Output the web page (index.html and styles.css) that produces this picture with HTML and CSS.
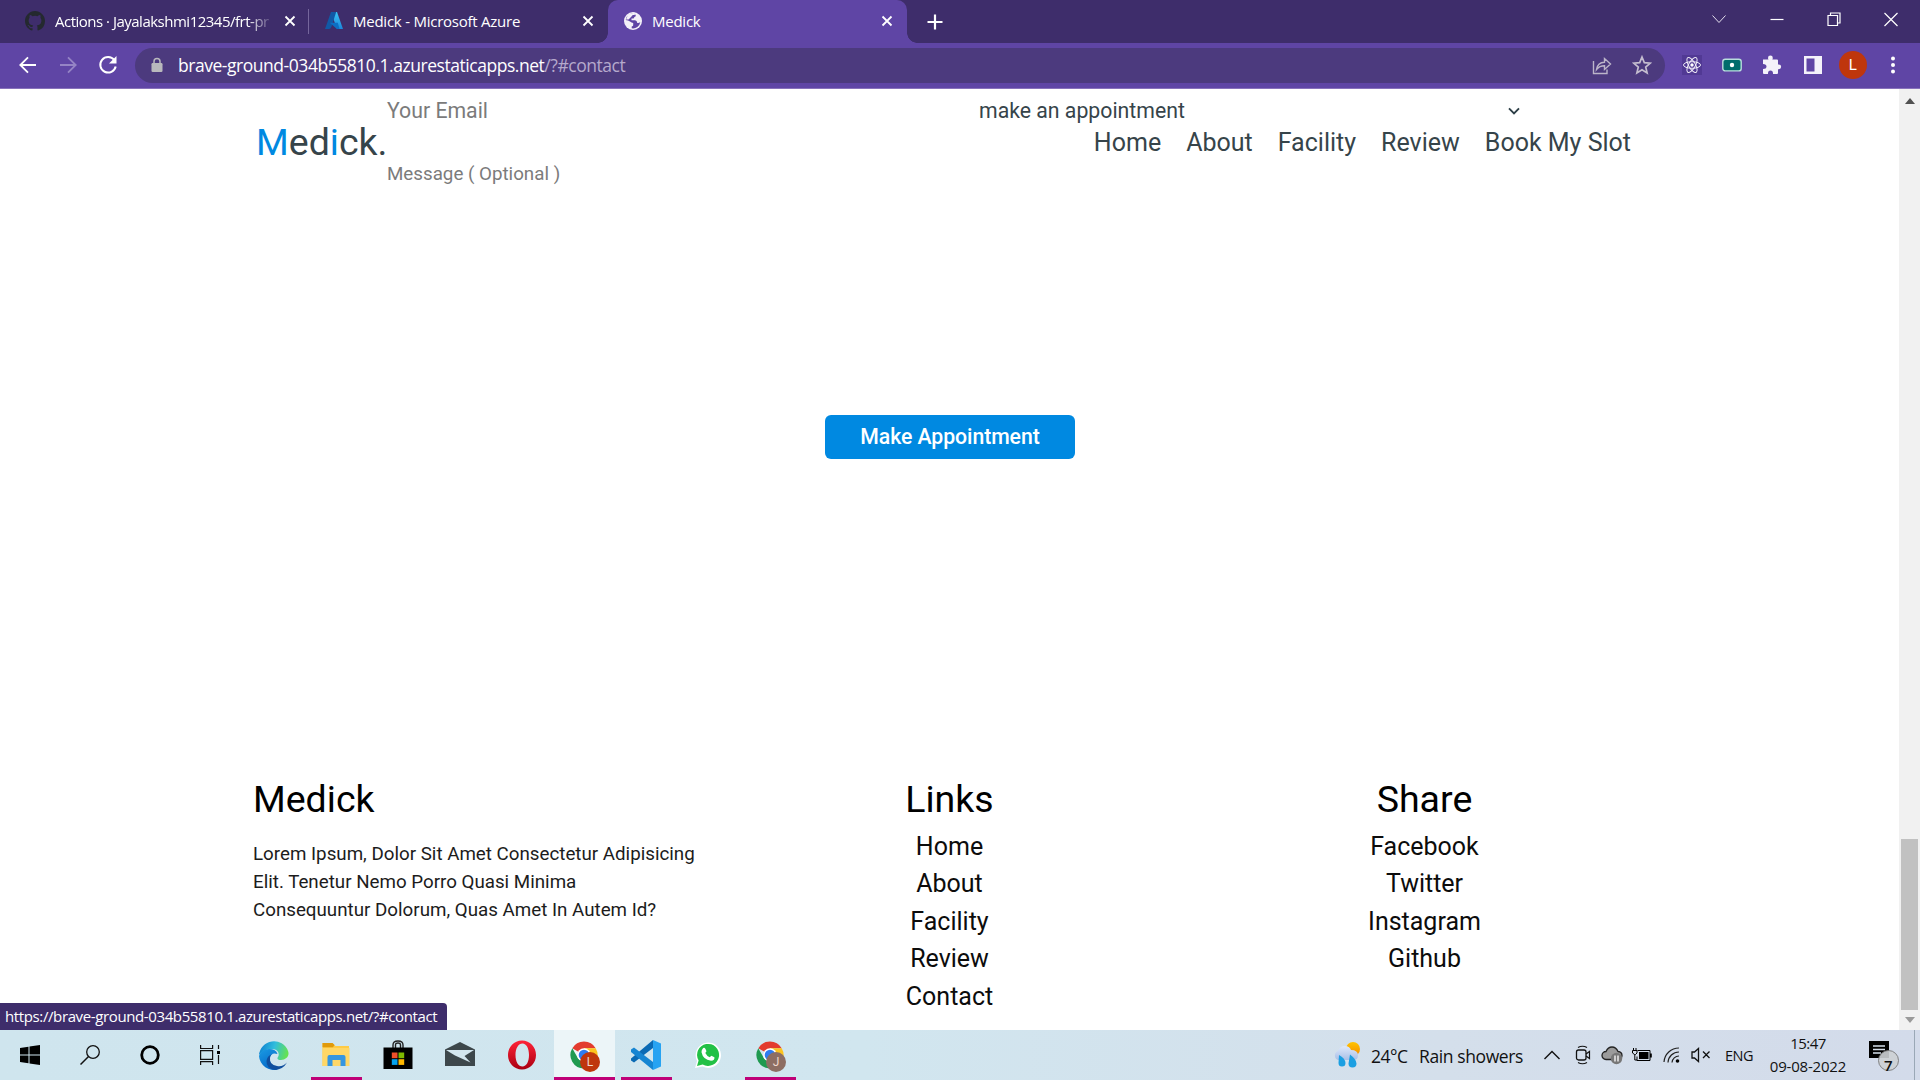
FILE: index.html
```html
<!DOCTYPE html>
<html lang="en">
<head>
<meta charset="utf-8">
<title>Medick</title>
<link rel="stylesheet" href="styles.css">
</head>
<body>
<svg class="defs" width="0" height="0">
  <defs>
    <linearGradient id="az1" x1="0" y1="0" x2="0" y2="1"><stop offset="0" stop-color="#3cc6f5"/><stop offset="1" stop-color="#1b86dc"/></linearGradient>
    <linearGradient id="edgeTop" x1="0" y1="0.3" x2="1" y2="0.5"><stop offset="0" stop-color="#0c7fd0"/><stop offset=".5" stop-color="#31bddd"/><stop offset="1" stop-color="#66e34f"/></linearGradient>
    <linearGradient id="edgeBody" x1="0" y1="0" x2="0.5" y2="1"><stop offset="0" stop-color="#1a9be3"/><stop offset="1" stop-color="#0669c8"/></linearGradient>
    <linearGradient id="op" x1="0" y1="0" x2="0" y2="1"><stop offset="0" stop-color="#ff2338"/><stop offset="1" stop-color="#a90011"/></linearGradient>
    <linearGradient id="sun" x1="0" y1="0" x2="0" y2="1"><stop offset="0" stop-color="#ffc400"/><stop offset="1" stop-color="#f58b00"/></linearGradient>
    <linearGradient id="cloud" x1="0" y1="0" x2="0" y2="1"><stop offset="0" stop-color="#dfe9fb"/><stop offset="1" stop-color="#a9bfe6"/></linearGradient>
    <symbol id="close" viewBox="0 0 12 12"><path d="M1.5 1.5l9 9M10.5 1.5l-9 9" stroke="#fff" stroke-width="1.8"/></symbol>
    <symbol id="chrome" viewBox="0 0 30 30">
      <path d="M15 15L3.3 8.2A13.5 13.5 0 0 1 26.7 8.2L15 8.2z" fill="#e33b2e"/>
      <path d="M15 8.2H26.7A13.5 13.5 0 0 1 15 28.5L20.9 18.4z" fill="#fcc31e"/>
      <path d="M3.3 8.2L9.1 18.4Q12 22 20.9 18.4L15 28.5A13.5 13.5 0 0 1 3.3 8.2z" fill="#1f9a50"/>
      <circle cx="15" cy="15" r="6.8" fill="#fff"/><circle cx="15" cy="15" r="5.3" fill="#2f7cf0"/>
    </symbol>
  </defs>
</svg>
<div class="desktop">
  <div class="tabs">
    <div class="tab tab-first">
      <svg class="fav" viewBox="0 0 16 16"><path fill="#24292f" d="M8 0C3.58 0 0 3.58 0 8c0 3.54 2.29 6.53 5.47 7.59.4.07.55-.17.55-.38 0-.19-.01-.82-.01-1.49-2.01.37-2.53-.49-2.69-.94-.09-.23-.48-.94-.82-1.13-.28-.15-.68-.52-.01-.53.63-.01 1.08.58 1.23.82.72 1.21 1.87.87 2.33.66.07-.52.28-.87.51-1.07-1.78-.2-3.64-.89-3.64-3.95 0-.87.31-1.59.82-2.15-.08-.2-.36-1.02.08-2.12 0 0 .67-.21 2.2.82a7.6 7.6 0 0 1 4 0c1.53-1.04 2.2-.82 2.2-.82.44 1.1.16 1.92.08 2.12.51.56.82 1.27.82 2.15 0 3.07-1.87 3.75-3.65 3.95.29.25.54.73.54 1.48 0 1.07-.01 1.93-.01 2.2 0 .21.15.46.55.38A8.01 8.01 0 0 0 16 8c0-4.42-3.58-8-8-8z"/></svg>
      <span class="tab-title fade">Actions · Jayalakshmi12345/frt-pr</span>
      <svg class="x"><use href="#close"/></svg>
    </div>
    <div class="tab">
      <svg class="fav" viewBox="0 0 20 20"><path d="M7 1h6l6 17h-6z" fill="url(#az1)"/><path d="M7 1h5.2L7.500 15.500Q6.500 18 5 18H1z" fill="#1159a6"/><path d="M5.800 11.800h8l1.700 6.200h-2.600z" fill="#0c6fc4"/></svg>
      <span class="tab-title">Medick - Microsoft Azure</span>
      <svg class="x"><use href="#close"/></svg>
    </div>
    <div class="tab active">
      <svg class="fav" viewBox="0 0 20 20"><circle cx="10" cy="10" r="9" fill="#f3f0f8"/><path fill="#5f45a5" d="M11.800 2.800A7.400 7.400 0 0 0 2.700 9q2.500.2 4.300 1.500 1.500 1 3.200 1.500v2.200q0 1-1.500 1.200v1.900a7.400 7.400 0 0 0 8.600-6.300q-1.300 1.300-3 .9-.3-2.500-2.300-2.700H8.500V7.500h1.800q1-.3 1-1.500 1.600-.3 1.500-1.500z" /><path d="M11.800 1.500v2.500h-2L8 6 5.500 8.500 3 8.500 5 3.500z" fill="#f3f0f8"/></svg>
      <span class="tab-title">Medick</span>
      <svg class="x"><use href="#close"/></svg>
    </div>
    <svg class="plus" viewBox="0 0 16 16"><path d="M8 .5v15M.5 8h15" stroke="#fff" stroke-width="2.200"/></svg>
    <div class="win">
      <svg viewBox="0 0 16 16"><path d="M1.500 4.500l6.500 7 6.500-7" fill="none" stroke="#e5e0ee"/></svg>
      <svg viewBox="0 0 16 16"><path d="M1.500 8.500h13" stroke="#fff" stroke-width="1.200"/></svg>
      <svg viewBox="0 0 16 16"><path d="M2 4.500h9.500v10H2zM4.500 4.500V2H14v10h-2.500" fill="none" stroke="#fff" stroke-width="1.200"/></svg>
      <svg viewBox="0 0 16 16"><path d="M1.500 2l13 13M14.500 2l-13 13" stroke="#fff" stroke-width="1.200"/></svg>
    </div>
  </div>

  <div class="toolbar">
    <div class="nav-btns">
      <svg viewBox="0 0 20 20"><path d="M18 10H2.500M10 2.300L2.300 10l7.700 7.700" fill="none" stroke="#fff" stroke-width="1.800"/></svg>
      <svg viewBox="0 0 20 20"><path d="M2 10h15.500M10 2.300l7.700 7.700-7.700 7.700" fill="none" stroke="#9584c5" stroke-width="1.800"/></svg>
      <svg viewBox="0 0 20 20"><path d="M16.300 5A7.800 7.800 0 1 0 17.700 11.500" fill="none" stroke="#fff" stroke-width="2"/><path d="M18.500 1v7.500H11z" fill="#fff"/></svg>
    </div>
    <div class="omnibox">
      <svg class="lock" viewBox="0 0 12 16"><path d="M3 7V4.500a3 3 0 0 1 6 0V7" fill="none" stroke="#b9b9bd" stroke-width="1.500"/><rect x=".5" y="6" width="11" height="9" rx="1.200" fill="#b9b9bd"/></svg>
      <span class="url">brave-ground-034b55810.1.azurestaticapps.net<i>/?#contact</i></span>
      <svg class="share" viewBox="0 0 20 20"><path d="M1.500 6v12.500h13.500v-4M4.500 14.500q1-7 8-7.300V3.500L18.500 9l-6 5.500v-3.700q-5 0-8 3.700z" fill="none" stroke="#bcb5c9" stroke-width="1.400"/></svg>
      <svg class="star" viewBox="0 0 20 20"><path d="M10 2l2.300 5.600 6 .5-4.600 3.900 1.400 5.900-5.100-3.200-5.100 3.200 1.400-5.900L1.700 8.100l6-.5z" fill="none" stroke="#c4bdcf" stroke-width="1.700"/></svg>
    </div>
    <div class="exts">
      <div><svg class="react" viewBox="0 0 20 20"><g fill="none" stroke="#f0ecf8" stroke-width="1"><ellipse cx="10" cy="10" rx="8.500" ry="3.300"/><ellipse cx="10" cy="10" rx="8.500" ry="3.300" transform="rotate(60 10 10)"/><ellipse cx="10" cy="10" rx="8.500" ry="3.300" transform="rotate(120 10 10)"/></g><circle cx="10" cy="10" r="1.700" fill="#fff"/></svg></div>
      <div><svg viewBox="0 0 20 20"><rect x=".8" y="4.300" width="18.400" height="11.600" rx="2.500" fill="#006c6c" stroke="#b9dedd" stroke-width="1.400"/><circle cx="10" cy="10" r="2.200" fill="#fff"/></svg></div>
      <div><svg viewBox="0 0 20 20"><path fill="#f4f2fa" d="M1 4.500h5.500q-.5-1-.5-1.600a2.400 2.400 0 0 1 4.800 0q0 .6-.5 1.600H15q1 0 1 1v4h.8a2.300 2.300 0 0 1 0 4.700H16V18q0 1-1 1h-4q.2-3.500-2.500-3.500T6 19H2q-1 0-1-1v-4q3.500 0 3.500-2.500T1 9z"/></svg></div>
      <div><svg viewBox="0 0 20 20"><path fill="#f4f2fa" fill-rule="evenodd" d="M1 1h18v18H1zM3.500 3.500v13h8v-13z"/></svg></div>
      <div><span class="avatar">L</span></div>
      <div><svg viewBox="0 0 20 20"><circle cx="10" cy="3.500" r="2" fill="#fff"/><circle cx="10" cy="10" r="2" fill="#fff"/><circle cx="10" cy="16.500" r="2" fill="#fff"/></svg></div>
    </div>
  </div>

  <div class="view">
    <main class="page">
      <header class="header">
        <a class="logo"><b>M</b>ed<b>i</b>ck.</a>
        <nav class="nav"><a>Home</a><a>About</a><a>Facility</a><a>Review</a><a>Book My Slot</a></nav>
      </header>
      <form class="form">
        <div class="fields">
          <span class="placeholder">Your Email</span>
          <span class="select">make an appointment
            <svg viewBox="0 0 12 8"><path d="M1 1.300l5 5 5-5" fill="none" stroke="#2c3e46" stroke-width="1.900"/></svg>
          </span>
        </div>
        <div class="message">Message ( Optional )</div>
        <a class="btn">Make Appointment</a>
      </form>
      <footer class="footer">
        <div class="about"><h3>Medick</h3><p>Lorem Ipsum, Dolor Sit Amet Consectetur Adipisicing<br>Elit. Tenetur Nemo Porro Quasi Minima<br>Consequuntur Dolorum, Quas Amet In Autem Id?</p></div>
        <div class="links"><h3>Links</h3><a>Home</a><a>About</a><a>Facility</a><a>Review</a><a>Contact</a></div>
        <div class="links"><h3>Share</h3><a>Facebook</a><a>Twitter</a><a>Instagram</a><a>Github</a></div>
      </footer>
      <div class="status"><span>https://brave-ground-034b55810.1.azurestaticapps.net/?#contact</span></div>
    </main>
    <div class="scrollbar">
      <svg viewBox="0 0 10 6"><path d="M0 6l5-6 5 6z" fill="#505050"/></svg>
      <div class="thumb"></div>
      <svg viewBox="0 0 10 6"><path d="M0 0l5 6 5-6z" fill="#9a9a9a"/></svg>
    </div>
  </div>

  <div class="taskbar">
    <div class="sys">
      <div><svg width="20" height="20" viewBox="0 0 20 20"><path d="M0 3l8.500-1.200v7.700H0zM9.500 1.600L20 0v9.500H9.500zM0 10.500h8.500v7.700L0 17zM9.500 10.500H20V20L9.500 18.400z"/></svg></div>
      <div><svg width="20" height="20" viewBox="0 0 20 20"><circle cx="13" cy="7" r="6.300" fill="none" stroke="#111" stroke-width="1.300"/><path d="M8.500 11.500L.5 19.500" stroke="#111" stroke-width="1.500"/></svg></div>
      <div><svg width="20" height="20" viewBox="0 0 20 20"><circle cx="10" cy="10" r="8.300" fill="none" stroke="#000" stroke-width="2.800"/></svg></div>
      <div><svg width="20" height="20" viewBox="0 0 20 20"><path d="M.6 0v3.500h12V0M.6 5.700h12v8.600H.6zM.6 20v-3.300h12V20M18.500 0v4M18.500 10v9" fill="none" stroke="#111" stroke-width="1.200"/><path d="M17 6h3v3h-3z"/></svg></div>
    </div>
    <div class="apps">
      <div><svg viewBox="0 0 30 30"><path d="M0 15A15 15 0 0 1 29 11c2 5-2 9-7 9-4 0-4-2-3-3 2-3 0-8-6-8Q4 9 0 15z" fill="url(#edgeTop)"/><path d="M0 16Q2 9 10 9q7 0 8.500 5Q12 12 11 18q-1 8 8 11.400A15 15 0 0 1 0 16z" fill="url(#edgeBody)"/><path d="M11 17q-1 8 7 9 6 1 10-3.500A15 15 0 0 1 16 30Q7 28 7.500 21 8 16 13 14q-1.500 1-2 3z" fill="#104f9e"/></svg></div>
      <div class="open"><svg viewBox="0 0 30 30"><path d="M1.500 3h10l3 3H28v20H1.500z" fill="#ffcb45"/><path d="M1.500 3h10l2 2-1.500 2.300H1.500z" fill="#e09a0b"/><path d="M1.500 8H28.500v18H1.500z" fill="#ffd766"/><path d="M6.500 26v-9q0-2 2-2h14q2 0 2 2v9h-5v-6h-8v6z" fill="#3596e0"/></svg></div>
      <div><svg viewBox="0 0 30 30"><path d="M10 8V5q0-4 5-4t5 4v3M12.500 8V5q0-2 2.500-2t2.500 2v3" fill="none" stroke="#222" stroke-width="1.400"/><path d="M.5 7.500h29V29h-29z"/><path d="M8.800 12.500h5.700v5.700H8.800z" fill="#f0502a"/><path d="M15.500 12.500h5.700v5.700h-5.700z" fill="#7eb900"/><path d="M8.800 19.200h5.700v5.700H8.800z" fill="#04a2ed"/><path d="M15.500 19.200h5.700v5.700h-5.700z" fill="#ffb800"/></svg></div>
      <div><svg viewBox="0 0 30 30"><path d="M0 9.500L15 2l15 7.500V26H0z" fill="#3d474b"/><path d="M1 10h28l-9.500 6 6 6.500L10 15.500z" fill="#d3e6ee"/></svg></div>
      <div><svg viewBox="0 0 30 30"><path fill-rule="evenodd" d="M15 .5C7 .5 1 7 1 15s6 14.500 14 14.500S29 23 29 15 23 .5 15 .5zM15.500 3.500c4 0 6.500 5 6.500 11.500s-2.500 11.500-6.500 11.500S8.500 22 8.500 15 11.500 3.500 15.500 3.500z" fill="url(#op)"/></svg></div>
      <div class="open current"><svg viewBox="0 0 30 30"><use href="#chrome"/></svg><span class="badge red">L</span></div>
      <div class="open"><svg viewBox="0 0 30 30"><path d="M22 0l8 3.500v23L22 30z" fill="#27a3f2"/><path d="M22 0v8L3 22.500 0 20.500v-2z" fill="#0a6ab4"/><path d="M0 9.500L3 7.500 22 22v8L0 12z" fill="#1685d2"/></svg></div>
      <div><svg viewBox="0 0 30 30"><path d="M2 28l2-7A12.700 12.700 0 1 1 9.500 26.500z" fill="#fff"/><path d="M4 26l1.600-5.500A11 11 0 1 1 9.700 24.500z" fill="#22c146"/><path d="M9.500 9q1.500-2.300 3 0l1 2.300-1.200 1.700q1.500 3 4.400 4.300l1.700-1.600 3 1.500q.6 3-3.400 3.600-8-1-9.500-8.500-.1-2 1-3.300z" fill="#fff"/></svg></div>
      <div class="open"><svg viewBox="0 0 30 30"><use href="#chrome"/></svg><span class="badge tan">J</span></div>
    </div>
    <div class="tray">
      <div class="weather">
        <svg width="28" height="28" viewBox="0 0 28 28"><circle cx="20" cy="8" r="7" fill="url(#sun)"/><path d="M5 19a4.800 4.800 0 0 1 0-9q2-5 7-5 4.500 0 6 4 7 0 7 5.500Q25 19 20 19z" fill="url(#cloud)"/><path d="M6 14q6 3 6.500 8a3.500 3.500 0 0 1-7 0zM17 13.500q6.500 5 6.500 9a4 4 0 0 1-8 0z" fill="#1b9fe2"/></svg>
        <span class="temp">24°C</span><span class="cond">Rain showers</span>
      </div>
      <div class="t-chev"><svg width="18" height="12" viewBox="0 0 18 12"><path d="M1.500 10L9 2.500l7.500 7.500" fill="none" stroke="#111" stroke-width="1.400"/></svg></div>
      <div><svg width="16" height="20" viewBox="0 0 16 20"><path d="M3 2.500q4.500-2.500 9 0M3 17.500q4.500 2.500 9 0" fill="none" stroke="#111" stroke-width="1.200"/><rect x="1.500" y="5" width="9.500" height="10" rx="2" fill="none" stroke="#111" stroke-width="1.300"/><path d="M11 9l3.500-2.500v7L11 11" fill="none" stroke="#111" stroke-width="1.200"/></svg></div>
      <div><svg width="22" height="20" viewBox="0 0 22 20"><path d="M5 14.500a4 4 0 0 1 0-8Q7 2 11 2t6 4.500q4 .5 4 4t-4 4z" fill="#9b9b9b" stroke="#222" stroke-width="1.300"/><circle cx="15.500" cy="13.500" r="5.700" fill="#777"/><path d="M14 10.500v6M17 10.500v6" stroke="#fff" stroke-width="1.300"/></svg></div>
      <div><svg width="20" height="16" viewBox="0 0 20 16"><path d="M5.500 3.500h12.500v10H5v-4" fill="none" stroke="#000"/><path d="M7 5h9.500v7H7zM18 6.500h1.800v4H18z"/><path d="M1.500 1v2.500M4 1v2.500M.5 3.500h4.500v2.500L3.500 7.500h-1L.5 6zM2.800 7.500v5.500H5" fill="none" stroke="#000"/></svg></div>
      <div><svg width="18" height="18" viewBox="0 0 18 18"><g fill="none" stroke="#222" stroke-width="1.200"><path d="M1 16A15 15 0 0 1 16 2M5 16.500A11 11 0 0 1 16 6M9 16.500A7 7 0 0 1 16 10"/></g><circle cx="14.500" cy="15" r="1.800"/></svg></div>
      <div><svg width="20" height="16" viewBox="0 0 20 16"><path d="M1 5h2.500L7.500 1.500v13L3.500 11H1zM12 4.500l6.500 6.500M18.500 4.500L12 11" fill="none" stroke="#111" stroke-width="1.300"/></svg></div>
      <div class="eng"><span>ENG</span></div>
      <div class="clock"><span class="time">15:47</span><span class="date">09-08-2022</span></div>
      <div class="notif"><svg width="30" height="32" viewBox="0 0 30 32"><path d="M0 0h20v17H0z"/><path d="M4 5h12M4 8.500h12M4 12h8" stroke="#d5dfeb" stroke-width="1.300"/><circle cx="19.500" cy="19.500" r="10" fill="#cdd0d4" fill-opacity=".9" stroke="#777" stroke-width=".9"/></svg><b class="count">7</b></div>
      <div class="peek"></div>
    </div>
  </div>
</div>
</body>
</html>
```
FILE: styles.css
```css
* { box-sizing: border-box; }
body { margin: 0; background: #fff; font-family: "Open Sans", "Noto Sans", sans-serif; }
.defs { display: block; position: absolute; }
.desktop { width: 1920px; height: 1080px; overflow: hidden; display: flex; flex-direction: column; }
svg { display: block; flex: none; }

/* Tab strip */
.tabs { height: 43px; background: #3e2d6b; display: flex; align-items: center; color: #fff; }
.tab { width: 299px; height: 43px; display: flex; align-items: center; padding: 0 14px 2px 15px; gap: 9px; }
.tab-first { width: 309px; gap: 10px; padding-left: 25px; padding-right: 12px; border-right: 1px solid transparent; border-image: linear-gradient(transparent 22%, #75669c 22% 78%, transparent 78%) 1; }
.fav { width: 20px; height: 20px; }
.tab-title { flex: 1; font-size: 15px; letter-spacing: -.24px; white-space: nowrap; }
.fade { width: 219px; flex: none; -webkit-mask-image: linear-gradient(90deg, #000 88%, transparent 100%); mask-image: linear-gradient(90deg, #000 88%, transparent 100%); letter-spacing: -.5px; }
.x { width: 12px; height: 12px; margin-left: auto; }
.active { background: #5f45a5; border-radius: 10px 10px 0 0; position: relative; }
.active::before, .active::after { content: ""; position: absolute; bottom: 0; width: 10px; height: 10px; }
.active::before { left: -10px; background: radial-gradient(circle at 0 0, transparent 9.5px, #5f45a5 10px); }
.active::after { right: -10px; background: radial-gradient(circle at 100% 0, transparent 9.5px, #5f45a5 10px); }
.plus { width: 16px; height: 16px; margin-left: 20px; }
.win { margin-left: auto; display: flex; padding: 0 0 6px; }
.win svg { width: 16px; height: 16px; margin-right: 41.200px; }
.win svg:last-child { margin-right: 21px; }

/* Toolbar */
.toolbar { height: 46px; background: #5f45a5; border-bottom: 1px solid #8872bb; display: flex; align-items: center; padding-bottom: 1px; }
.nav-btns { width: 135px; display: flex; gap: 20px; padding-left: 18px; }
.nav-btns svg { width: 20px; height: 20px; }
.omnibox { width: 1530px; height: 35px; border-radius: 18px; background: #4c3a7e; display: flex; align-items: center; padding: 0 13px 0 16px; }
.lock { width: 12px; height: 16px; }
.url { flex: 1; margin-left: 15px; font-size: 17.5px; letter-spacing: -.46px; color: #fff; }
.url i { font-style: normal; color: #b5a9cc; }
.share, .star { width: 20px; height: 20px; }
.share { margin-right: 20px; }
.exts { display: flex; padding-left: 7px; }
.exts > div { width: 40.200px; display: flex; justify-content: center; align-items: center; }
.exts svg { width: 20px; height: 20px; }
.exts .react { background: #513994; }
.avatar { width: 28px; height: 28px; border-radius: 50%; background: #bf360c; color: #fff; font: 15px/28px Roboto, sans-serif; text-align: center; }

/* Page */
.view { height: 941px; display: flex; }
.page { width: 1899px; background: #fff; position: relative; display: flex; flex-direction: column; font-family: Roboto, sans-serif; }
.header { position: absolute; top: 26px; left: 256px; right: 268px; height: 54px; display: flex; align-items: center; justify-content: space-between; color: #36444a; }
.logo { font-size: 37.5px; }
.logo b { font-weight: 400; color: #0089e1; }
.nav { display: flex; gap: 25px; font-size: 25px; }
.form { height: 670px; padding: 9px 0 0 387px; display: flex; flex-direction: column; }
.fields { display: grid; grid-template-columns: 592px 541px; height: 25px; line-height: 25px; font-size: 21.25px; }
.placeholder, .message { color: #7b7b7b; }
.select { color: #36444a; display: flex; align-items: center; justify-content: space-between; }
.select svg { width: 12px; height: 8px; }
.message { margin-top: 39px; height: 24px; line-height: 24px; font-size: 18.75px; }
.btn { margin: 229px 0 0 438px; width: 250px; height: 44px; line-height: 44px; border-radius: 6px; background: #0089e1; color: #fff; font-size: 21.25px; letter-spacing: -.08px; font-weight: 500; text-align: center; }
.footer { display: grid; grid-template-columns: repeat(3, 475px); padding: 18px 237px 0; color: #000; }
.footer h3 { margin: 0; font-size: 37.5px; line-height: 44px; font-weight: 400; }
.about { padding-left: 16px; }
.about p { margin: 19px 0 0; font-size: 18.75px; line-height: 28px; color: #1c1c1c; }
.links { display: flex; flex-direction: column; align-items: center; }
.links h3 { margin-bottom: 6.500px; }
.links a { font-size: 25px; line-height: 37.5px; color: #0c0c0c; }
.status { position: absolute; left: 0; bottom: 0; width: 447px; height: 27px; padding-left: 5px; border-radius: 0 4px 0 0; background: #3e2d6b; color: #fff; font: 15px/27px "Open Sans", sans-serif; letter-spacing: -.38px; white-space: nowrap; }

/* Scrollbar */
.scrollbar { width: 21px; background: #f1f1f1; display: flex; flex-direction: column; align-items: center; padding: 9px 0 7px; }
.scrollbar svg { width: 10px; height: 6px; }
.thumb { width: 17px; height: 171px; margin: auto 0 7px; background: #c1c1c1; }

/* Taskbar */
.taskbar { height: 50px; background: linear-gradient(90deg, #cfe5ee 0%, #d1e6ef 45%, #d4dfeb 75%, #d3dbea 100%); display: flex; color: #111; }
.sys, .apps, .tray { display: flex; }
.sys > div { width: 60px; display: flex; align-items: center; justify-content: center; }
.apps { margin-left: 3px; }
.apps > div { width: 62px; display: flex; align-items: center; justify-content: center; position: relative; }
.apps svg { width: 30px; height: 30px; }
.open { background: linear-gradient(#bf0077, #bf0077) center bottom / 51px 3px no-repeat; }
.apps .current { background: linear-gradient(#bf0077, #bf0077) center bottom / 61px 3px no-repeat, linear-gradient(#ecf5f8, #ecf5f8) center / 61px 100% no-repeat; }
.badge { position: absolute; left: 27px; top: 22px; width: 20px; height: 20px; border-radius: 50%; color: #f0d8cc; font: 12px/20px Roboto, sans-serif; text-align: center; }
.red { background: #bf360c; }
.tan { background: #8d6e63; }
.tray { margin-left: auto; }
.tray > div { width: 29.600px; display: flex; align-items: center; justify-content: center; }
.tray .weather { width: 203px; justify-content: flex-start; font-size: 17.5px; white-space: nowrap; }
.temp, .cond { padding-top: 2px; }
.temp { margin-left: 10px; width: 48px; letter-spacing: -.5px; }
.cond { letter-spacing: -.4px; }
.tray .t-chev { width: 32px; }
.tray .eng { width: 46px; font-size: 14.5px; letter-spacing: -.5px; }
.tray .clock { width: 92px; flex-direction: column; font-size: 15px; line-height: 23px; letter-spacing: -.2px; }
.clock .time { letter-spacing: -.5px; }
.tray .notif { width: 60px; position: relative; padding: 4px 0 0 0; }
.count { position: absolute; left: 30px; top: 25px; font-size: 15px; line-height: 20px; font-weight: 600; }
.tray .peek { width: 6px; border-left: 1px solid #9aa8b6; }
```
